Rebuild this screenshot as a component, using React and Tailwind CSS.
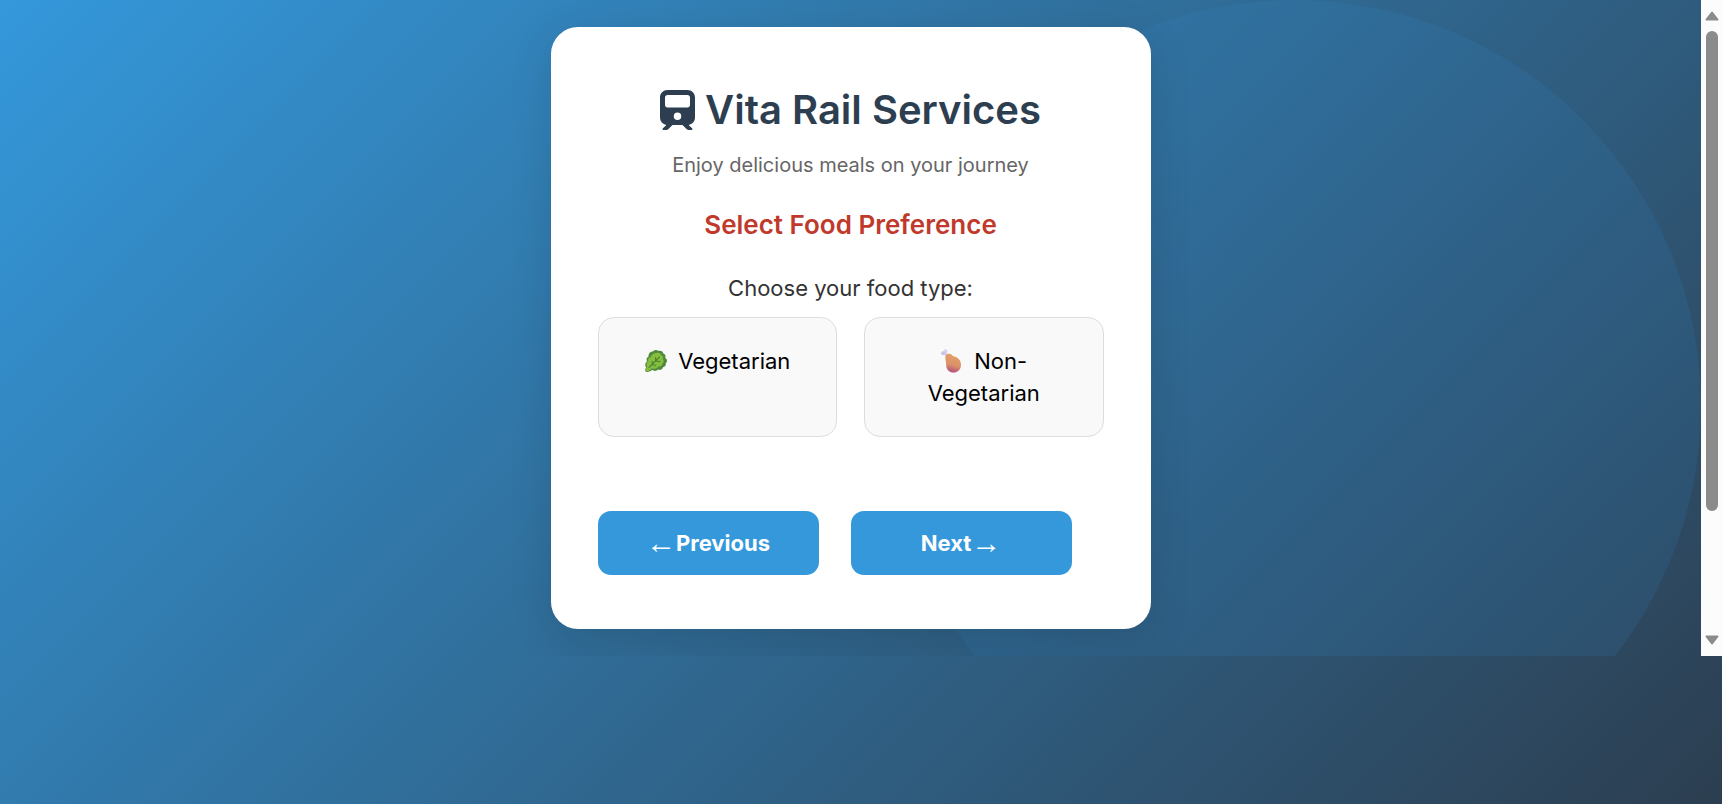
import { FaTrain } from "react-icons/fa6";

function LeafyGreen() {
  return (
    <svg viewBox="0 0 24 24" className="h-6 w-6 shrink-0" aria-hidden="true">
      <path d="M9 2.600C10 0.800 13 0.600 14.500 2C17 1.200 19 2.500 19.500 4.800C21.500 5.200 22 7.500 21.200 9C23.500 10 23.500 13 21.800 14.200C22.300 16.500 20.800 18 19 18.200C18.500 20.500 16 21.500 14.200 20.600C12.500 22.500 9.500 22.300 8.300 20.800C6.500 22.800 2 23.800 1.400 22.200C0.800 20.500 2 19.500 2 18C0.500 16 1.300 13.500 3 12.500C2 10 3 8 4.600 7.400C4.400 4.500 6.500 2.500 9 2.600Z" fill="#4f8a3c" />
      <path d="M12.500 4C15 3 16.800 4.500 17 6.200C19 6.500 19.600 8.500 18.800 10C20.300 11.500 19.800 13.600 18.400 14.500C18.300 17 16.200 17.800 14.400 17.500C12.500 20 9.500 20.300 8 19.300C6 21.500 3.500 23 2 22C1.200 20.500 3 18.500 3 17C2 15 2.800 13 4.200 12.200C3.800 9.700 5 8.200 6.800 8C7.500 5.500 10 4 12.500 4Z" fill="#86bd3f" />
      <path d="M5 18.500L15.500 8M11.600 12V8.500M11.600 12L16 12.600M8.200 15.400V12.400M8.200 15.400L11.800 16.600" fill="none" stroke="#4b862f" strokeWidth="1.100" strokeLinecap="round" />
    </svg>
  );
}

function Drumstick() {
  return (
    <svg viewBox="0 0 24 24" className="h-6 w-6 shrink-0" aria-hidden="true">
      <defs>
        <linearGradient id="meat" x1="0.600" y1="0" x2="0.400" y2="1">
          <stop offset="0" stopColor="#e3a267" />
          <stop offset="0.600" stopColor="#db9268" />
          <stop offset="1" stopColor="#b04a80" />
        </linearGradient>
      </defs>
      <path d="M4.500 4L8 8" stroke="#d9cdee" strokeWidth="2.800" strokeLinecap="round" />
      <circle cx="5.600" cy="2.200" r="2" fill="#dccff0" />
      <circle cx="3" cy="4.200" r="2" fill="#cfc0e8" />
      <path d="M8 4.800C10.500 4.400 12 6 13.500 7.300C18 8.200 21 11.400 21 15.800C21 20.400 17.800 23.600 13.600 23.600C9.200 23.600 6.200 20.400 6.200 16C6.200 12.500 5 10.500 5.400 7.800C5.700 6.200 6.600 5.100 8 4.800Z" fill="url(#meat)" />
    </svg>
  );
}

function FoodOption({ icon, children }) {
  return (
    <button type="button" className="flex items-start justify-center rounded-2xl border border-[#dddddd] bg-[#f9f9f9] p-[27px] text-[22px] leading-8 text-black">
      <span>
        <span className="mr-2.5 inline-flex h-8 items-center align-top">{icon}</span>
        {children}
      </span>
    </button>
  );
}

function NavButton({ children }) {
  return (
    <button type="button" className="flex h-16 w-[221px] items-center justify-center rounded-[13px] bg-[#3498db] text-[22px] font-bold text-white">
      {children}
    </button>
  );
}

function Arrow({ children }) {
  return <span className="font-['Liberation_Serif',serif] text-[30px] leading-none font-normal">{children}</span>;
}

function ScrollBar() {
  return (
    <div className="flex w-[21px] shrink-0 flex-col items-center bg-[#fcfcfc] py-[11px]" aria-hidden="true">
      <svg viewBox="0 0 14 10" className="h-2.5 w-3.5">
        <path d="M7 1.500L12.500 8.500H1.500Z" fill="#8b8b8b" stroke="#8b8b8b" strokeWidth="2" strokeLinejoin="round" />
      </svg>
      <div className="mt-2.5 h-[480px] w-3 rounded-full bg-[#8b8b8b]" />
      <svg viewBox="0 0 14 10" className="mt-auto h-2.5 w-3.5">
        <path d="M7 8.500L12.500 1.500H1.500Z" fill="#8b8b8b" stroke="#8b8b8b" strokeWidth="2" strokeLinejoin="round" />
      </svg>
    </div>
  );
}

export default function App() {
  return (
    <div className="min-h-screen bg-[linear-gradient(135deg,#3498db,#2c3e50)] font-['Inter',sans-serif]">
      <div className="flex">
        <main className="relative flex flex-1 justify-center overflow-hidden py-[27px]">
          <div className="absolute top-0 right-0 h-[812px] w-[812px] rounded-full bg-[#3498db]/12" />
          <section className="relative w-full max-w-[600px] rounded-[27px] bg-white px-[47px] pt-[47px] pb-[54px] text-center shadow-[0_11px_44px_rgba(0,0,0,0.12)]">
            <h1 className="flex items-center justify-center gap-2.5 text-[40px] leading-[72px] font-semibold text-[#2c3e50]">
              <FaTrain className="h-10 w-[35px]" />
              Vita Rail Services
            </h1>
            <p className="text-xl leading-[38px] text-[#666666]">Enjoy delicious meals on your journey</p>
            <h2 className="mt-[22px] text-[26px] leading-[38px] font-semibold text-[#c0392b]">Select Food Preference</h2>
            <p id="food-type" className="mt-7 text-[22px] leading-8 text-[#333333]">Choose your food type:</p>
            <div role="group" aria-labelledby="food-type" className="mt-[13px] grid grid-cols-2 gap-[27px]">
              <FoodOption icon={<LeafyGreen />}>Vegetarian</FoodOption>
              <FoodOption icon={<Drumstick />}>Non-Vegetarian</FoodOption>
            </div>
            <div className="mt-[74px] flex gap-8">
              <NavButton><Arrow>←</Arrow>Previous</NavButton>
              <NavButton>Next<Arrow>→</Arrow></NavButton>
            </div>
          </section>
        </main>
        <ScrollBar />
      </div>
    </div>
  );
}
